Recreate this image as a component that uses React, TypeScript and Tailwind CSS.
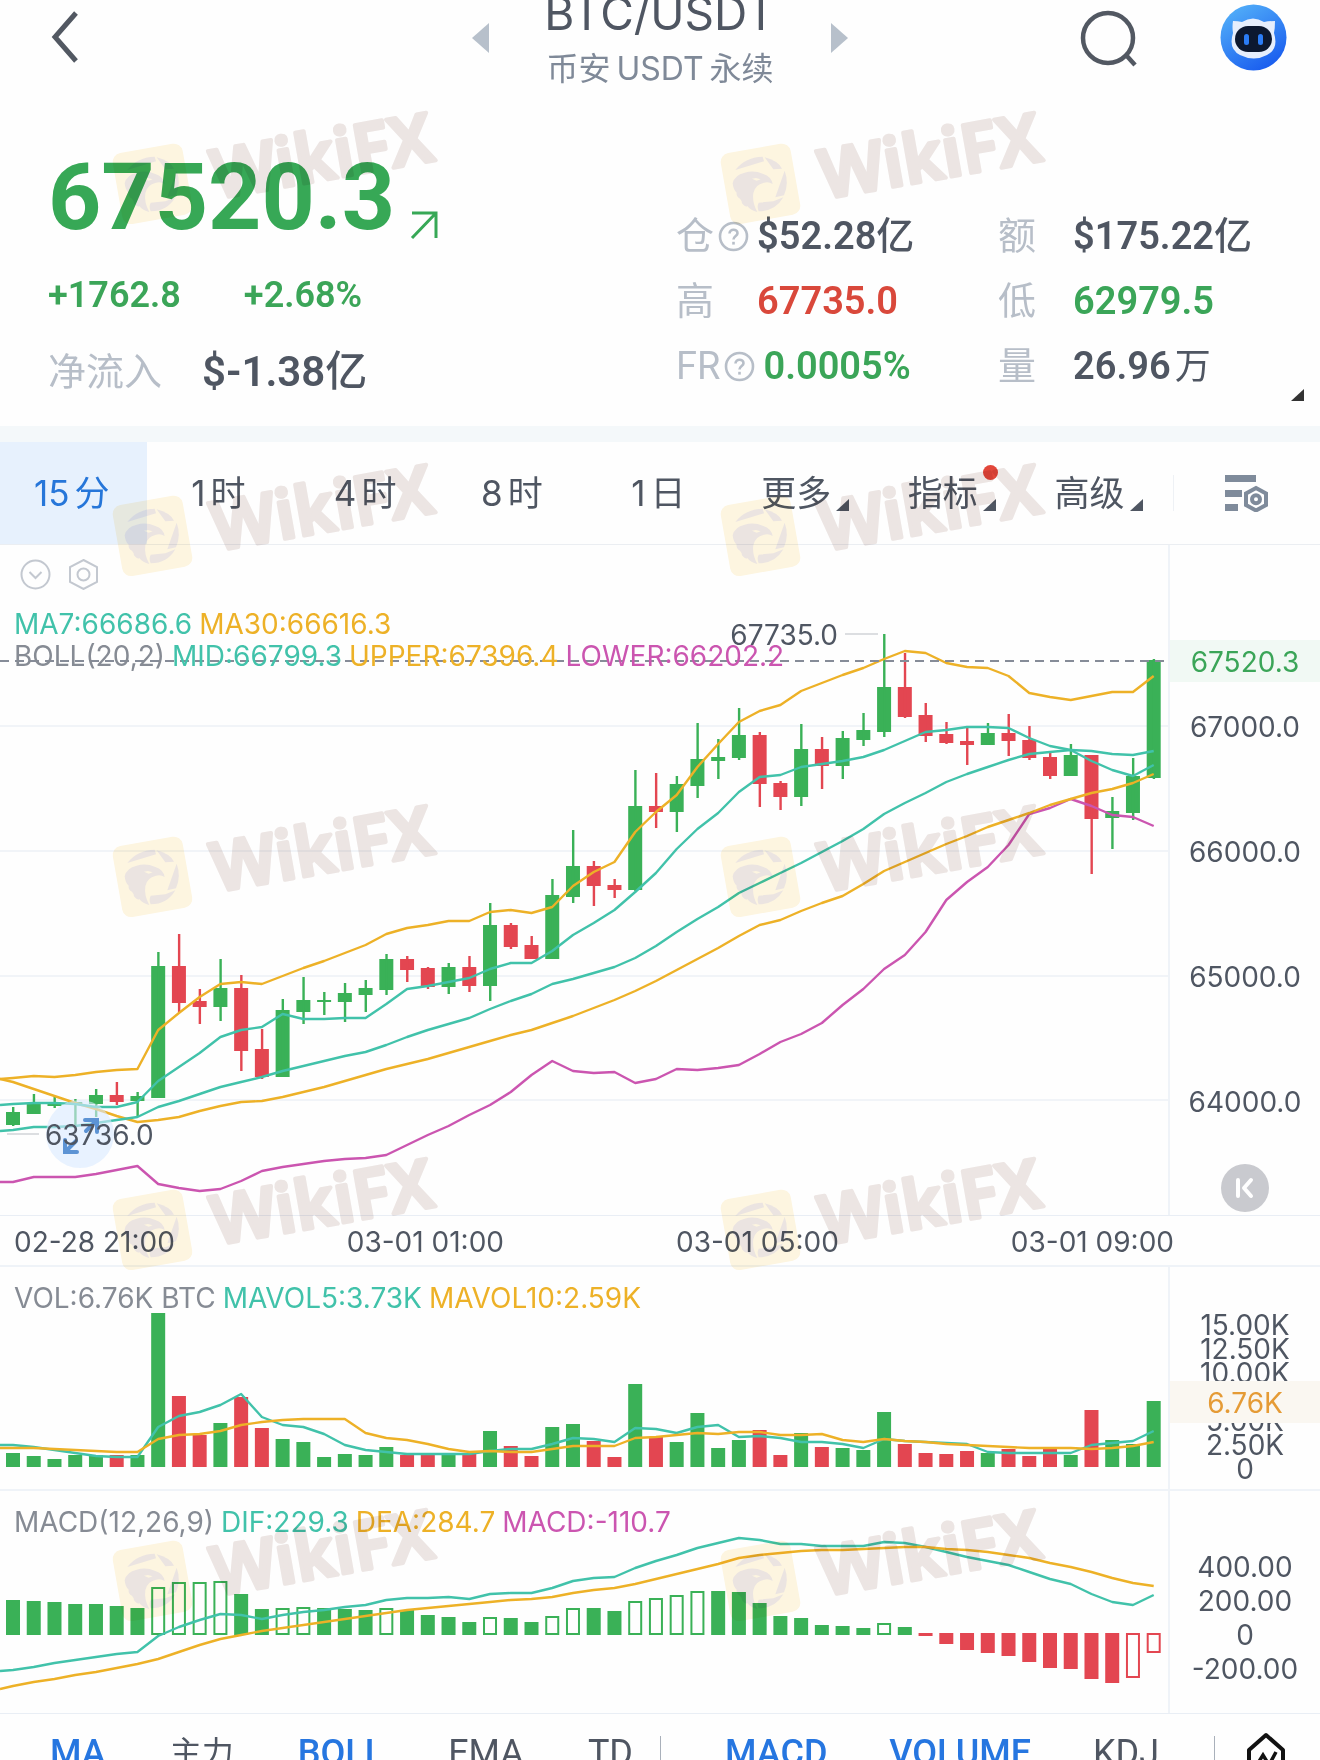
import type { ReactNode } from 'react';

const GREEN = '#3ab157';
const RED = '#e34651';
const TEAL = '#41c2aa';
const AMBER = '#edb127';
const MAGENTA = '#cb55b0';

// every series shares the same x positions
const STEP = 20.74;
const xAt = (i: number) => 13 + STEP * i;

// [direction, body top, body bottom, wick top, wick bottom]
const candles: [number, number, number, number, number][] = [
  [1, 1112, 1125, 1107, 1126], [1, 1103, 1114, 1094, 1114], [1, 1104, 1106, 1097, 1108], [1, 1102, 1104, 1099, 1125],
  [1, 1095, 1104, 1089, 1117], [0, 1095, 1102, 1082, 1105], [1, 1096, 1101, 1092, 1117], [1, 966, 1098, 952, 1098],
  [0, 966, 1003, 934, 1012], [0, 1001, 1007, 989, 1024], [1, 988, 1007, 959, 1021], [0, 988, 1051, 975, 1071],
  [0, 1049, 1077, 1029, 1079], [1, 1010, 1077, 999, 1077], [1, 1000, 1012, 977, 1024], [1, 1000, 1002, 992, 1015],
  [1, 993, 1002, 983, 1022], [1, 988, 995, 980, 1012], [1, 959, 990, 954, 995], [0, 959, 970, 956, 982],
  [0, 968, 987, 967, 989], [1, 967, 987, 963, 994], [0, 967, 986, 956, 992], [1, 925, 986, 903, 1001],
  [0, 925, 947, 923, 949], [0, 945, 959, 936, 959], [1, 895, 959, 879, 959], [1, 866, 897, 830, 903],
  [0, 866, 886, 861, 906], [0, 885, 890, 879, 898], [1, 806, 890, 770, 891], [0, 806, 812, 773, 828],
  [1, 784, 812, 776, 832], [1, 759, 786, 723, 798], [1, 757, 761, 739, 779], [1, 735, 758, 708, 760],
  [0, 735, 784, 732, 807], [0, 783, 797, 781, 810], [1, 749, 797, 724, 806], [0, 749, 766, 737, 789],
  [1, 738, 766, 731, 779], [1, 730, 740, 713, 746], [1, 687, 732, 634, 737], [0, 687, 717, 653, 718],
  [0, 715, 736, 703, 742], [0, 734, 743, 722, 744], [0, 741, 745, 728, 765], [1, 733, 745, 723, 745],
  [0, 733, 741, 714, 756], [0, 740, 758, 726, 760], [0, 757, 776, 753, 779], [1, 755, 776, 744, 776],
  [0, 755, 819, 755, 874], [1, 811, 818, 797, 849], [1, 776, 813, 758, 820], [1, 660, 778, 659, 779],
];

const upper = [
  1078, 1076, 1077, 1075, 1072, 1070, 1069, 1030, 1013, 997, 984, 982, 984, 976, 968, 961, 953, 945, 934, 928, 925, 921, 921, 912, 910, 913,
  907, 886, 872, 862, 832, 812, 795, 767, 744, 722, 711, 705, 691, 683, 675, 668, 659, 651, 653, 663, 667, 668, 676, 693, 697, 700, 696, 692, 692, 676,
];
const ma7 = [
  1104, 1103, 1103, 1104, 1107, 1107, 1102, 1081, 1067, 1053, 1037, 1030, 1027, 1014, 1019, 1019, 1018, 1018, 1004, 989, 986, 982, 978, 969, 963, 963,
  951, 935, 923, 910, 892, 873, 849, 829, 813, 792, 777, 775, 767, 764, 761, 757, 750, 741, 732, 730, 727, 727, 728, 738, 746, 750, 761, 770, 776, 765,
];
const mid = [
  1130, 1127, 1127, 1126, 1123, 1120, 1117, 1107, 1101, 1094, 1087, 1082, 1077, 1071, 1066, 1061, 1056, 1052, 1045, 1037, 1030, 1024, 1018, 1009, 1001, 994,
  984, 979, 973, 967, 958, 946, 932, 919, 907, 893, 883, 873, 863, 852, 841, 829, 814, 803, 793, 782, 774, 767, 760, 754, 752, 750, 751, 754, 755, 751,
];
const ma30 = [
  1082, 1089, 1096, 1103, 1109, 1116, 1122, 1120, 1117, 1111, 1106, 1102, 1101, 1097, 1092, 1087, 1081, 1075, 1069, 1064, 1059, 1053, 1047, 1041, 1035, 1030,
  1023, 1016, 1008, 1000, 991, 981, 970, 959, 948, 936, 925, 920, 911, 903, 896, 884, 871, 862, 853, 844, 836, 827, 820, 813, 805, 799, 793, 789, 783, 774,
];
const lower = [
  1182, 1177, 1177, 1177, 1174, 1170, 1166, 1184, 1188, 1191, 1189, 1181, 1171, 1167, 1164, 1161, 1159, 1158, 1155, 1145, 1135, 1126, 1115, 1105, 1092, 1075,
  1061, 1071, 1073, 1072, 1083, 1079, 1069, 1070, 1068, 1065, 1054, 1042, 1034, 1023, 1005, 989, 969, 955, 932, 900, 882, 867, 845, 814, 808, 799, 806, 815, 817, 826,
];

const volume = [
  1453, 1456, 1459, 1455, 1455, 1455, 1455, 1313, 1396, 1435, 1423, 1397, 1428, 1439, 1442, 1457, 1454, 1455, 1447, 1455, 1455, 1455, 1454, 1431, 1446, 1456,
  1427, 1424, 1441, 1457, 1384, 1437, 1442, 1413, 1448, 1440, 1430, 1455, 1433, 1447, 1448, 1450, 1412, 1444, 1453, 1454, 1451, 1453, 1449, 1456, 1449, 1455, 1410, 1440, 1444, 1401,
];
const mavol5 = [
  1445, 1447, 1450, 1453, 1456, 1457, 1457, 1427, 1416, 1412, 1405, 1394, 1417, 1425, 1427, 1434, 1445, 1450, 1452, 1454, 1454, 1454, 1454, 1451, 1449, 1449,
  1444, 1438, 1439, 1442, 1428, 1429, 1433, 1427, 1425, 1437, 1436, 1438, 1442, 1442, 1444, 1448, 1439, 1441, 1442, 1443, 1444, 1452, 1453, 1453, 1453, 1453, 1445, 1443, 1441, 1431,
];
const mavol10 = [
  1448, 1448, 1449, 1450, 1451, 1452, 1452, 1439, 1435, 1434, 1431, 1425, 1422, 1420, 1419, 1419, 1419, 1433, 1438, 1440, 1444, 1449, 1452, 1451, 1452, 1452,
  1449, 1446, 1446, 1446, 1438, 1437, 1435, 1433, 1434, 1432, 1432, 1435, 1435, 1434, 1440, 1442, 1439, 1441, 1442, 1444, 1445, 1446, 1447, 1448, 1448, 1448, 1449, 1448, 1446, 1442,
];

const macd = [
  1600, 1601, 1602, 1604, 1604, 1606, 1608, 1587, 1582, 1582, 1581, 1594, 1609, 1608, 1607, 1608, 1609, 1610, 1608, 1610, 1615, 1617, 1622, 1617, 1618, 1622,
  1616, 1608, 1608, 1611, 1601, 1598, 1595, 1591, 1591, 1592, 1603, 1616, 1618, 1625, 1626, 1628, 1623, 1627, 1636, 1644, 1650, 1653, 1656, 1662, 1668, 1669, 1679, 1683, 1678, 1653,
];
const hollow = [7, 8, 9, 10, 13, 14, 18, 23, 26, 27, 30, 31, 32, 33, 42, 54, 55];
const dif = [
  1670, 1667, 1663, 1660, 1657, 1654, 1652, 1636, 1627, 1620, 1614, 1615, 1619, 1615, 1612, 1610, 1607, 1605, 1600, 1598, 1598, 1597, 1599, 1594, 1593, 1593,
  1588, 1581, 1578, 1577, 1568, 1561, 1555, 1548, 1543, 1538, 1540, 1544, 1544, 1546, 1546, 1546, 1542, 1543, 1547, 1552, 1557, 1561, 1565, 1572, 1579, 1584, 1594, 1602, 1605, 1595,
];
const dea = [
  1686, 1682, 1679, 1675, 1672, 1668, 1664, 1659, 1652, 1645, 1639, 1635, 1631, 1628, 1625, 1622, 1619, 1616, 1613, 1610, 1608, 1606, 1604, 1602, 1600, 1599,
  1597, 1593, 1590, 1588, 1584, 1579, 1574, 1569, 1564, 1558, 1555, 1553, 1551, 1550, 1550, 1549, 1548, 1547, 1547, 1549, 1550, 1552, 1555, 1558, 1563, 1567, 1572, 1578, 1583, 1586,
];

const Line = ({ data, start, color }: { data: number[]; start: number; color: string }) => (
  <polyline
    points={[`0,${start}`, ...data.map((y, i) => `${xAt(i)},${y}`)].join(' ')}
    fill="none"
    stroke={color}
    strokeWidth="2.4"
    strokeLinejoin="round"
  />
);

const Plot = ({ top, height, className, children }: { top: number; height: number; className: string; children: ReactNode }) => (
  <svg className={`block w-full ${className}`} viewBox={`0 ${top} 1168 ${height}`} preserveAspectRatio="none" aria-hidden="true">
    {children}
  </svg>
);

const PricePlot = () => (
  <Plot top={545} height={670} className="h-[670px]">
    {[726, 851, 976, 1100].map((y) => (
      <path key={y} d={`M0 ${y}H1168`} stroke="#f1f4f8" strokeWidth="2" />
    ))}
    {candles.map(([up, top, bottom, high, low], i) => (
      <g key={i} fill={up ? GREEN : RED}>
        <rect x={xAt(i) - 7} y={top} width="14" height={bottom - top} />
        <rect x={xAt(i) - 1} y={high} width="2.4" height={low - high} />
      </g>
    ))}
    <Line data={lower} start={1182} color={MAGENTA} />
    <Line data={ma30} start={1079} color={AMBER} />
    <Line data={upper} start={1079} color={AMBER} />
    <Line data={mid} start={1131} color={TEAL} />
    <Line data={ma7} start={1105} color={TEAL} />
    <path d="M0 661H1166" stroke="#868c98" strokeWidth="2" strokeDasharray="9 6" />
    <path d="M845 634H878M7 1134H39" stroke="#dcdee1" strokeWidth="2" />
  </Plot>
);

const VolumePlot = () => (
  <Plot top={1267} height={222} className="h-[222px]">
    {volume.map((y, i) => (
      <rect key={i} x={xAt(i) - 7} y={y} width="14" height={1467 - y} fill={candles[i][0] ? GREEN : RED} />
    ))}
    <Line data={mavol5} start={1445} color={TEAL} />
    <Line data={mavol10} start={1448} color={AMBER} />
  </Plot>
);

const MacdPlot = () => (
  <Plot top={1491} height={222} className="h-[222px]">
    {macd.map((y, i) => {
      const up = i < 44;
      const color = up ? GREEN : RED;
      const top = up ? y : 1633;
      const height = up ? 1635 - y : y - 1633;
      return hollow.includes(i) ? (
        <rect key={i} x={xAt(i) - 6} y={top + 1} width="12" height={height - 2} fill="none" stroke={color} strokeWidth="2" />
      ) : (
        <rect key={i} x={xAt(i) - 7} y={top} width="14" height={height} fill={color} />
      );
    })}
    <Line data={dif} start={1671} color={TEAL} />
    <Line data={dea} start={1689} color={AMBER} />
  </Plot>
);

const Watermark = () => (
  <svg width="350" height="135" viewBox="0 0 350 135">
    <rect x="15" y="48" width="71" height="72" rx="9" fill="#fef6e1" transform="rotate(-10 50 84)" />
    <g transform="scale(.3333)" fill="#ece5e2">
      <path d="M68 250Q74 224 104 218Q132 210 160 222Q184 230 188 252Q176 244 162 248Q134 254 130 280Q126 308 142 336Q122 332 112 318Q108 324 96 310Q96 302 90 296Q78 290 80 278Q70 270 68 250ZM126 236L140 242L152 238L138 234Z" fillRule="evenodd" />
      <path d="M76 210Q104 172 158 170L162 184Z" />
      <path d="M164 172Q204 182 216 206L190 208Z" />
      <path d="M224 212Q238 250 222 286L196 292Z" />
      <path d="M220 292Q196 334 146 334Q140 320 146 308L190 304Z" />
    </g>
    <text
      x="114"
      y="99"
      transform="rotate(-10 114 99)"
      fill="#ede6e4"
      stroke="#ede6e4"
      strokeWidth="4"
      strokeLinejoin="round"
      className="font-['Noto_Sans',sans-serif] text-[68px] font-semibold"
    >
      WikiFX
    </text>
  </svg>
);

const HelpIcon = () => (
  <svg width="31" height="31" viewBox="0 0 31 31" fill="none" stroke="#b7bec8" strokeWidth="2.6">
    <circle cx="15.5" cy="15.5" r="13.5" />
    <path d="M11.5 12.5C11.5 7.5 19.5 7.5 19.5 12.3C19.5 15 15.5 15.2 15.5 18.6" />
    <path d="M15.5 20.8V23.6" />
  </svg>
);

const BotIcon = () => (
  <svg width="67" height="67" viewBox="0 0 67 67">
    <defs>
      <linearGradient id="bot" x1="0.2" y1="0" x2="0.8" y2="1">
        <stop offset="0" stopColor="#53b0f9" />
        <stop offset="1" stopColor="#1658ee" />
      </linearGradient>
    </defs>
    <circle cx="33.5" cy="33.5" r="33" fill="url(#bot)" />
    <path d="M13 17Q18 17 22 18Q33 11 44 18Q49 17 55 17Q55 24 54 29Q59 45 47 51Q34 58 20 51Q8 45 13 29Q12 23 13 17Z" fill="#e6eefc" />
    <rect x="15" y="22" width="37" height="26" rx="13" fill="#0c1830" />
    <rect x="24" y="30" width="5" height="11" rx="2.5" fill="#2b7cf5" />
    <rect x="38" y="30" width="5" height="11" rx="2.5" fill="#2b7cf5" />
  </svg>
);

const Corner = ({ className }: { className: string }) => (
  <svg className={className} width="13" height="12" viewBox="0 0 13 12" aria-hidden="true">
    <path d="M13 0V12H0Z" fill="currentColor" />
  </svg>
);

const stats = [
  [
    { label: '仓', help: true, value: '$52.28', unit: '亿', color: 'text-[#4f5662]' },
    { label: '高', value: '67735.0', color: 'text-[#d9483b]' },
    { label: 'FR', help: true, value: '0.0005%', color: 'text-[#3ba558]' },
  ],
  [
    { label: '额', value: '$175.22', unit: '亿', color: 'text-[#4f5662]' },
    { label: '低', value: '62979.5', color: 'text-[#3ba558]' },
    { label: '量', value: '26.96', unit: '万', spaced: true, color: 'text-[#4f5662]' },
  ],
];

const tabs = [
  { count: '15', label: '分', active: true },
  { count: '1', label: '时' },
  { count: '4', label: '时' },
  { count: '8', label: '时' },
  { count: '1', label: '日' },
  { label: '更多', menu: true },
  { label: '指标', menu: true, dot: true },
  { label: '高级', menu: true },
];

const App = () => {
  return (
    <div className="relative w-full overflow-hidden bg-[#fefefe] font-[Inter,'Noto_Sans_CJK_SC',sans-serif] text-[#4f5662]">
      <header className="relative flex h-[86px] justify-center">
        <button aria-label="返回" className="absolute top-2 left-[48px]">
          <svg width="32" height="58" viewBox="0 0 32 58" fill="none" stroke="#525862" strokeWidth="5">
            <path d="M28 5L7 29L28 53" />
          </svg>
        </button>
        <div className="flex gap-[53px]">
          <button aria-label="上一个" className="mt-[22px] h-8">
            <svg width="20" height="32" viewBox="0 0 20 32"><path d="M18 1V31L1 16Z" fill="#b7c0cb" /></svg>
          </button>
          <div className="flex h-[86px] flex-col items-center justify-end">
            <h1 className="mb-[15px] text-[46px] leading-[48px]">BTC/USDT</h1>
            <p className="flex gap-[6px] text-[32px] leading-[34px] text-[#7f8998]">
              <span>币安</span>
              <span>USDT</span>
              <span>永续</span>
            </p>
          </div>
          <button aria-label="下一个" className="mt-[22px] h-8">
            <svg width="20" height="32" viewBox="0 0 20 32"><path d="M2 1V31L19 16Z" fill="#b7c0cb" /></svg>
          </button>
        </div>
        <div className="absolute top-[4px] right-[33px] flex items-center gap-[80px]">
          <button aria-label="搜索">
            <svg width="60" height="62" viewBox="0 0 60 62" fill="none" stroke="#525862" strokeWidth="4.5">
              <circle cx="28" cy="31" r="25" />
              <path d="M46 48L55 58" />
            </svg>
          </button>
          <button aria-label="助手"><BotIcon /></button>
        </div>
      </header>

      <section className="relative flex h-[340px] font-[Roboto,'Noto_Sans_CJK_SC',sans-serif]">
        <div className="w-[676px] pt-[64px] pl-[48px]">
          <p className="flex items-end text-[93px] leading-[96px] font-bold text-[#37a856]">
            67520.3
            <svg className="mb-[6px] ml-[15px]" width="30" height="30" viewBox="0 0 30 30" fill="none" stroke="currentColor" strokeWidth="3">
              <path d="M2 3H26V28M26 3L2 28" />
            </svg>
          </p>
          <p className="mt-[29px] flex gap-[63px] text-[36px] leading-[40px] font-semibold text-[#3ba558]">
            <span>+1762.8</span>
            <span>+2.68%</span>
          </p>
          <p className="mt-[33px] flex items-center gap-[40px] text-[38px] leading-[48px]">
            <span className="text-[#b7bec8]">净流入</span>
            <span className="text-[42px] font-semibold">$-1.38<span className="font-medium">亿</span></span>
          </p>
        </div>
        {stats.map((column, c) => (
          <dl key={c} className={c === 0 ? 'w-[322px] pt-[118px]' : 'pt-[118px]'}>
            {column.map((item) => (
              <div key={item.label} className="flex h-[65px] items-center text-[38px]">
                <dt className={`flex items-center gap-[4px] pr-[8px] text-[#b7bec8] ${c === 0 ? 'min-w-[81px]' : 'min-w-[75px]'}`}>
                  {item.label}
                  {item.help && <HelpIcon />}
                </dt>
                <dd className={`text-[38px] font-semibold ${item.color}`}>
                  {item.value}
                  {item.unit && <span className={item.spaced ? 'ml-1 text-[36px] font-normal' : 'font-medium'}>{item.unit}</span>}
                </dd>
              </div>
            ))}
          </dl>
        ))}
        <Corner className="absolute right-[16px] bottom-[25px] text-[#333]" />
      </section>

      <div className="h-4 bg-[#f4f8fa]" />

      <nav className="grid h-[103px] grid-cols-9 border-b border-[#ebeef2] text-[35px]">
        {tabs.map((tab, i) => (
          <button
            key={i}
            className={`flex items-center justify-center ${tab.active ? 'bg-[#e7f1fd] text-[#2676d9]' : ''} ${tab.menu ? 'pr-[21px]' : 'pr-[3px]'}`}
          >
            <span className="relative flex gap-[5px]">
              {tab.count && <span>{tab.count}</span>}
              <span>{tab.label}</span>
              {tab.menu && <Corner className="absolute right-[-18px] bottom-[8px]" />}
              {tab.dot && <span className="absolute top-[-2px] right-[-20px] size-[15px] rounded-full bg-[#e2463a]" />}
            </span>
          </button>
        ))}
        <button aria-label="图表设置" className="flex items-center justify-center">
          <span className="mr-auto h-9 w-px bg-[#eef1f5]" />
          <svg className="mr-[51px]" width="44" height="38" viewBox="0 0 44 38">
            <path d="M0 1H31V8H0ZM0 16H17V23H0ZM0 30H13V37H0Z" fill="#7f8b9b" />
            <path d="M31 14L41 19.5V31L31 36.5L21 31V19.5Z" fill="#fff" stroke="#7f8b9b" strokeWidth="4" />
            <circle cx="31" cy="25.3" r="4" fill="none" stroke="#7f8b9b" strokeWidth="4" />
          </svg>
        </button>
      </nav>

      <main className="text-[28px] leading-[32px]">
        <section className="flex h-[671px] border-b border-[#e9eef5]">
          <div className="relative flex-1">
            <PricePlot />
            <div className="absolute top-[14px] left-[20px] flex gap-[17px]">
              <button aria-label="收起指标">
                <svg width="31" height="31" viewBox="0 0 31 31" fill="none" stroke="#c3c8d0" strokeWidth="2">
                  <circle cx="15.5" cy="15.5" r="14" />
                  <path d="M9.5 13L15.5 19L21.5 13" />
                </svg>
              </button>
              <button aria-label="指标设置">
                <svg width="31" height="31" viewBox="0 0 31 31" fill="none" stroke="#c3c8d0" strokeWidth="2">
                  <path d="M15.5 1L29 8V23L15.5 30L2 23V8Z" />
                  <circle cx="15.5" cy="15.5" r="6" />
                </svg>
              </button>
            </div>
            <div className="absolute top-[63px] left-[14px] whitespace-nowrap">
              <p className="flex gap-[7px]">
                <span className="text-[#41c2aa]">MA7:66686.6</span>
                <span className="text-[#edb127]">MA30:66616.3</span>
              </p>
              <p className="flex gap-[7px]">
                <span className="text-[#868b94]">BOLL(20,2)</span>
                <span className="text-[#41c2aa]">MID:66799.3</span>
                <span className="text-[#edb127]">UPPER:67396.4</span>
                <span className="text-[#cb55b0]">LOWER:66202.2</span>
              </p>
            </div>
            <span className="absolute top-[74px] right-[330px]">67735.0</span>
            <button aria-label="全屏" className="absolute bottom-[47px] left-[46px] size-[68px] rounded-full bg-[#d9e9ff]/60">
              <svg width="68" height="68" viewBox="0 0 68 68" fill="none" stroke="#5c93d4" strokeWidth="4" strokeLinecap="round">
                <path d="M39 20H51V32M50 21L40 31" />
                <path d="M19 40V52H31M20 51L30 41" />
              </svg>
            </button>
            <span className="absolute bottom-[64px] left-[45px]">63736.0</span>
          </div>
          <div className="relative w-[152px] border-l-2 border-[#eff3f8] pt-[119px] text-center">
            {['67000.0', '66000.0', '65000.0', '64000.0'].map((price) => (
              <div key={price} className="h-[125px] pt-[47px]">{price}</div>
            ))}
            <div className="absolute inset-x-0 top-[95px] bg-[#f1f9f4] pt-[6px] pb-[4px] text-[#3ba558]">67520.3</div>
            <button aria-label="回到最新" className="absolute top-[619px] right-[51px] flex size-[48px] items-center justify-center rounded-full bg-[#c9cacf]">
              <svg width="24" height="24" viewBox="0 0 24 24" fill="none" stroke="#fff" strokeWidth="4" strokeLinecap="round" strokeLinejoin="round">
                <path d="M5 4V20M18 4L11 12L18 20" />
              </svg>
            </button>
          </div>
        </section>

        <div className="flex h-[51px] items-center justify-between border-b-2 border-[#eff3f8] pt-[2px] pr-[146px] pl-[14px]">
          <span>02-28 21:00</span>
          <span>03-01 01:00</span>
          <span>03-01 05:00</span>
          <span>03-01 09:00</span>
        </div>

        <section className="flex h-[224px] border-b-2 border-[#eff3f8]">
          <div className="relative flex-1">
            <VolumePlot />
            <p className="absolute top-[15px] left-[14px] flex gap-[7px] whitespace-nowrap">
              <span className="text-[#868b94]">VOL:6.76K BTC</span>
              <span className="text-[#41c2aa]">MAVOL5:3.73K</span>
              <span className="text-[#edb127]">MAVOL10:2.59K</span>
            </p>
          </div>
          <div className="relative w-[152px] border-l-2 border-[#eff3f8] pt-[46px] text-center">
            <div className="flex h-[165px] flex-col justify-between leading-[24px]">
              {['15.00K', '12.50K', '10.00K', '7.50K', '5.00K', '2.50K', '0'].map((v) => (
                <span key={v}>{v}</span>
              ))}
            </div>
            <div className="absolute inset-x-0 top-[114px] bg-[#faf7f1] pt-[6px] pb-[4px] text-[#e59b36]">6.76K</div>
          </div>
        </section>

        <section className="flex h-[223px] border-b border-[#e9eef5]">
          <div className="relative flex-1">
            <MacdPlot />
            <p className="absolute top-[15px] left-[14px] flex gap-[7px] whitespace-nowrap">
              <span className="text-[#868b94]">MACD(12,26,9)</span>
              <span className="text-[#41c2aa]">DIF:229.3</span>
              <span className="text-[#edb127]">DEA:284.7</span>
              <span className="text-[#cb55b0]">MACD:-110.7</span>
            </p>
          </div>
          <div className="flex w-[152px] flex-col border-l-2 border-[#eff3f8] pt-[59px] text-center leading-[34px]">
            <span>400.00</span>
            <span>200.00</span>
            <span>0</span>
            <span>-200.00</span>
          </div>
        </section>
      </main>

      <footer className="flex h-[46px] items-start overflow-hidden pt-[18px] pl-[50px] font-[Roboto,'Noto_Sans_CJK_SC',sans-serif] text-[36px] leading-[42px]">
        <div className="flex flex-1 justify-between pr-[27px]">
          <button className="font-medium text-[#2676e0]">MA</button>
          <button className="text-[32px]">主力</button>
          <button className="font-medium text-[#2676e0]">BOLL</button>
          <button>EMA</button>
          <button>TD</button>
        </div>
        <div className="mt-[4px] h-10 w-px bg-[#a9b0ba]" />
        <div className="flex w-[553px] justify-between pr-[55px] pl-[64px]">
          <button className="font-medium text-[#2676e0]">MACD</button>
          <button className="font-medium text-[#2676e0]">VOLUME</button>
          <button>KDJ</button>
        </div>
        <div className="mt-[4px] h-10 w-px bg-[#a9b0ba]" />
        <button aria-label="画图" className="mr-[34px] ml-[31px]">
          <svg width="40" height="48" viewBox="0 0 40 48" fill="none" stroke="#111" strokeWidth="4">
            <path d="M20 3L37 18V34L20 45L3 34V18Z" strokeLinejoin="round" />
            <path d="M9 36L17 23L23 33L30 20" strokeWidth="3.5" />
          </svg>
        </button>
      </footer>

      <div className="pointer-events-none absolute inset-0 mix-blend-multiply" aria-hidden="true">
        {[100, 452, 793, 1146, 1497].map((top) => (
          <div key={top} className="absolute left-[102px] flex gap-[258px]" style={{ top }}>
            <Watermark />
            <Watermark />
          </div>
        ))}
      </div>
    </div>
  );
};

export default App;
